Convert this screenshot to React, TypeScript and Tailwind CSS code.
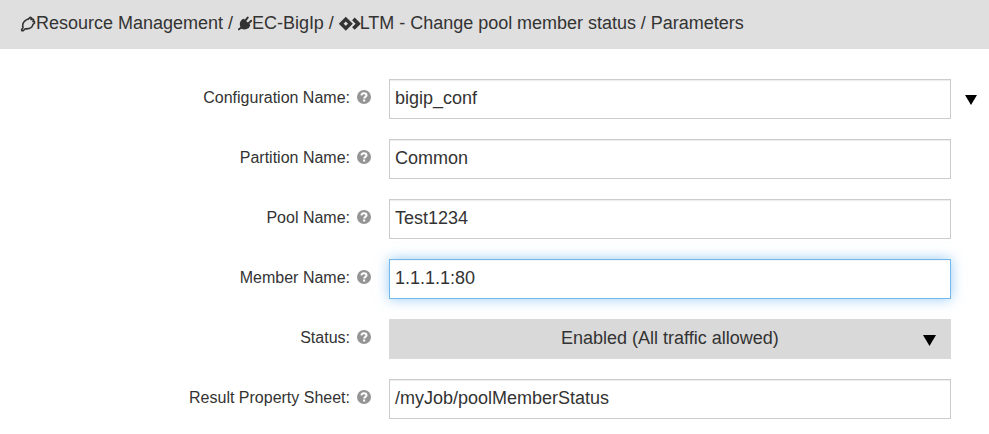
import React from "react";

function Help() {
  return (
    <svg className="relative -top-[2px] ml-[7px] h-[14px] w-[14px] shrink-0" viewBox="0 0 14 14">
      <circle cx="7" cy="7" r="7" fill="#949494" />
      <path d="M4.4 5.4C4.6 3.8 5.6 3.2 7 3.2c1.5 0 2.5.7 2.5 2 0 1.6-2.3 1.7-2.3 3.4" fill="none" stroke="#fff" strokeWidth="2" />
      <rect x="6.1" y="9.5" width="2.1" height="2" fill="#fff" />
    </svg>
  );
}

function PlugOutline() {
  return (
    <svg className="relative top-px h-4 w-4 shrink-0" viewBox="0 0 16 16" fill="none" stroke="#333" strokeWidth="1.6" strokeLinejoin="round" strokeLinecap="round">
      <path d="M1.6 13.6 3 11.8C2.2 9 3 6.6 5.2 4.7 6.2 3.7 7.3 3.5 8.2 3.2L10.2 1.3 11.6 2 11 3.6 12.8 3 13.7 4.1 12.9 5.5 14.4 5.6 14.6 7 13 8.4C12.3 11.2 9.4 13.2 5.2 12.8L3.2 14.8 1.8 14.7Z" />
    </svg>
  );
}

function PlugSolid() {
  return (
    <svg className="relative top-px h-4 w-[14px] shrink-0" viewBox="0 0 14 16" fill="#333" stroke="#333" strokeLinecap="round">
      <path d="M5.5 3.6 11.3 9.2C10.6 12.4 6.6 13.3 3.6 11.7 1.8 8.7 2.5 5 5.5 3.6Z" strokeWidth="1.8" strokeLinejoin="round" />
      <path d="M.9 13.3 3.4 11.5M7.5 4.4 9.7 1.6M10.6 7.2 13.2 4.8" strokeWidth="2" />
    </svg>
  );
}

function Step() {
  return (
    <svg className="relative top-px h-4 w-[22px] shrink-0" viewBox="0 0 22 16" fill="none" stroke="#333">
      <path d="M6.8 3.1 11.4 7.7 6.8 12.3 2.2 7.7Z" strokeWidth="3.4" />
      <path d="M14.4 2.9 19.2 7.7 14.4 12.5" strokeWidth="3.7" />
    </svg>
  );
}

function Row({ label, children }: { label: string; children: React.ReactNode }) {
  return (
    <div className="flex h-10 items-center">
      <div className="flex w-[371px] shrink-0 items-center justify-end">
        <span className="relative -top-px whitespace-nowrap text-[16px] leading-5">{label}</span>
        <Help />
      </div>
      {children}
    </div>
  );
}

const field = "ml-[18px] flex h-10 w-[562px] shrink-0 items-center border pl-[5px] pb-px text-[18px]";
const plain = " border-[#ccc] shadow-[inset_0_1px_1px_rgba(0,0,0,0.075)]";

export default function App() {
  return (
    <div className="h-[434px] w-[989px] overflow-hidden bg-white text-[#333] [font-family:'Liberation_Sans',Arial,sans-serif]">
      <header className="flex h-[49px] items-center whitespace-pre bg-[#dfdfdf] pb-[3px] pl-5 text-[18px]">
        <PlugOutline />
        <span>Resource Management / </span>
        <PlugSolid />
        <span className="-tracking-[0.04px]">EC-BigIp / </span>
        <Step />
        <span className="-ml-px -tracking-[0.02px]">LTM - Change pool member status / Parameters</span>
      </header>
      <main className="flex flex-col gap-5 pt-[30px]">
        <Row label="Configuration Name:">
          <div className={field + plain}>bigip_conf</div>
          <svg className="relative top-px ml-[14px] h-[10px] w-3" viewBox="0 0 12 10"><path d="M0 0h12L6 10z" /></svg>
        </Row>
        <Row label="Partition Name:"><div className={field + plain}>Common</div></Row>
        <Row label="Pool Name:"><div className={field + plain}>Test1234</div></Row>
        <Row label="Member Name:"><div className={field + " border-[#73b9ee] shadow-[inset_0_1px_1px_rgba(0,0,0,0.05),0_0_12px_rgba(82,168,236,0.6)]"}>1.1.1.1:80</div></Row>
        <Row label="Status:">
          <div className="ml-[18px] flex h-10 w-[562px] items-center bg-[#d9d9d9] pl-[172px] pr-[15px] text-[18px]">
            <span className="relative -top-px">Enabled (All traffic allowed)</span>
            <svg className="relative top-px ml-auto h-[11px] w-[13px]" viewBox="0 0 13 11"><path d="M0 0h13L6.5 11z" /></svg>
          </div>
        </Row>
        <Row label="Result Property Sheet:"><div className={field + plain}>/myJob/poolMemberStatus</div></Row>
      </main>
    </div>
  );
}
